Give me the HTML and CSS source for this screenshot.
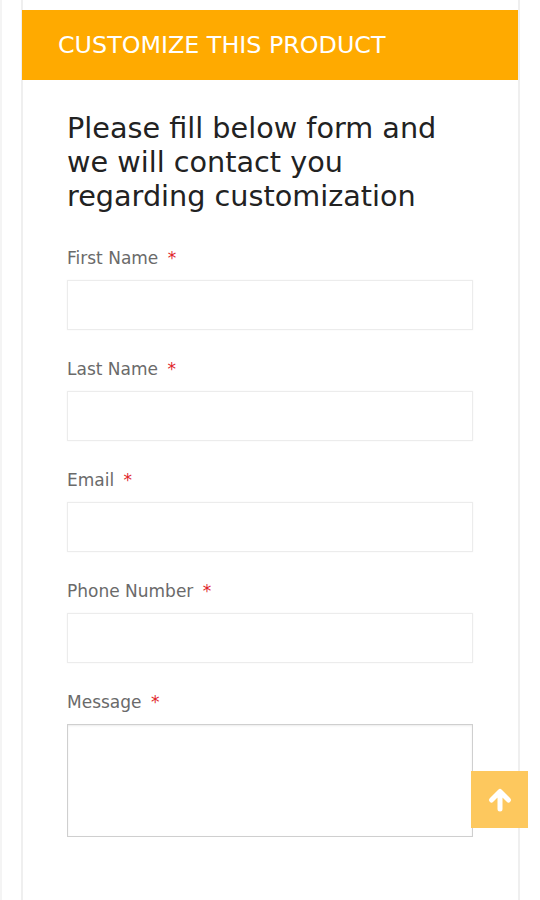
FILE: index.html
```html
<!DOCTYPE html>
<html>
<head>
<meta charset="utf-8">
<link rel="stylesheet" href="styles.css">
</head>
<body>
<div class="page">
  <div class="card">
    <div class="header">CUSTOMIZE THIS PRODUCT</div>
    <div class="content">
      <h2 class="intro">Please fill below form and we will contact you regarding customization</h2>
      <form class="form">
        <div class="field">
          <label class="label">First Name <span class="req">*</span></label>
          <input class="input" type="text">
        </div>
        <div class="field">
          <label class="label">Last Name <span class="req">*</span></label>
          <input class="input" type="text">
        </div>
        <div class="field">
          <label class="label">Email <span class="req">*</span></label>
          <input class="input" type="text">
        </div>
        <div class="field">
          <label class="label">Phone Number <span class="req">*</span></label>
          <input class="input" type="text">
        </div>
        <div class="field">
          <label class="label">Message <span class="req">*</span></label>
          <textarea class="textarea"></textarea>
        </div>
      </form>
    </div>
  </div>
</div>
<a class="to-top" href="#">
  <svg width="26" height="26" viewBox="0 0 26 26"><path d="M13 22V5M4.5 13L13 4.5L21.5 13" fill="none" stroke="#fff" stroke-width="5" stroke-linecap="round" stroke-linejoin="round"/></svg>
</a>
</body>
</html>
```

FILE: styles.css
```css
html, body {
  margin: 0;
  padding: 0;
  background: #fff;
}
body {
  font-family: "DejaVu Sans", Verdana, sans-serif;
  height: 900px;
  overflow: hidden;
}
.page {
  border-left: 2px solid #f4f4f4;
  padding-left: 19px;
  height: 900px;
  box-sizing: border-box;
}
.card {
  width: 499px;
  height: 900px;
  box-sizing: border-box;
  border-left: 2px solid #efefef;
  border-right: 2px solid #efefef;
  padding-top: 10px;
}
.header {
  background: #ffaa00;
  height: 70px;
  display: flex;
  align-items: center;
  padding-left: 36px;
  margin-left: -1px;
  color: #fff;
  font-size: 23.8px;
  padding-top: 0;
  box-sizing: border-box;
}
.content {
  padding-left: 44px;
}
.intro {
  margin: 31px 0 0 0;
  font-size: 28.7px;
  line-height: 34px;
  font-weight: normal;
  color: #222;
  width: 410px;
}
.form {
  margin-top: 33px;
}
.field {
  display: flex;
  flex-direction: column;
  margin-bottom: 27px;
}
.label {
  font-size: 17px;
  line-height: 24px;
  color: #6a6a6a;
  margin-bottom: 10px;
}
.req {
  color: #e0262a;
  margin-left: 4px;
}
.input {
  width: 406px;
  height: 50px;
  box-sizing: border-box;
  border: 1px solid #ececec;
  box-shadow: 0 0 2px rgba(0,0,0,0.04);
  background: #fff;
  margin: 0;
  padding: 0 10px;
}
.textarea {
  width: 406px;
  height: 113px;
  box-sizing: border-box;
  border: 1px solid #cfcfcf;
  box-shadow: inset 0 1px 2px rgba(0,0,0,0.08);
  background: #fff;
  margin: 0;
  resize: none;
}
.to-top {
  position: fixed;
  left: 471px;
  top: 771px;
  width: 57px;
  height: 57px;
  background: #fdc85e;
  display: flex;
  align-items: center;
  justify-content: center;
}
```
